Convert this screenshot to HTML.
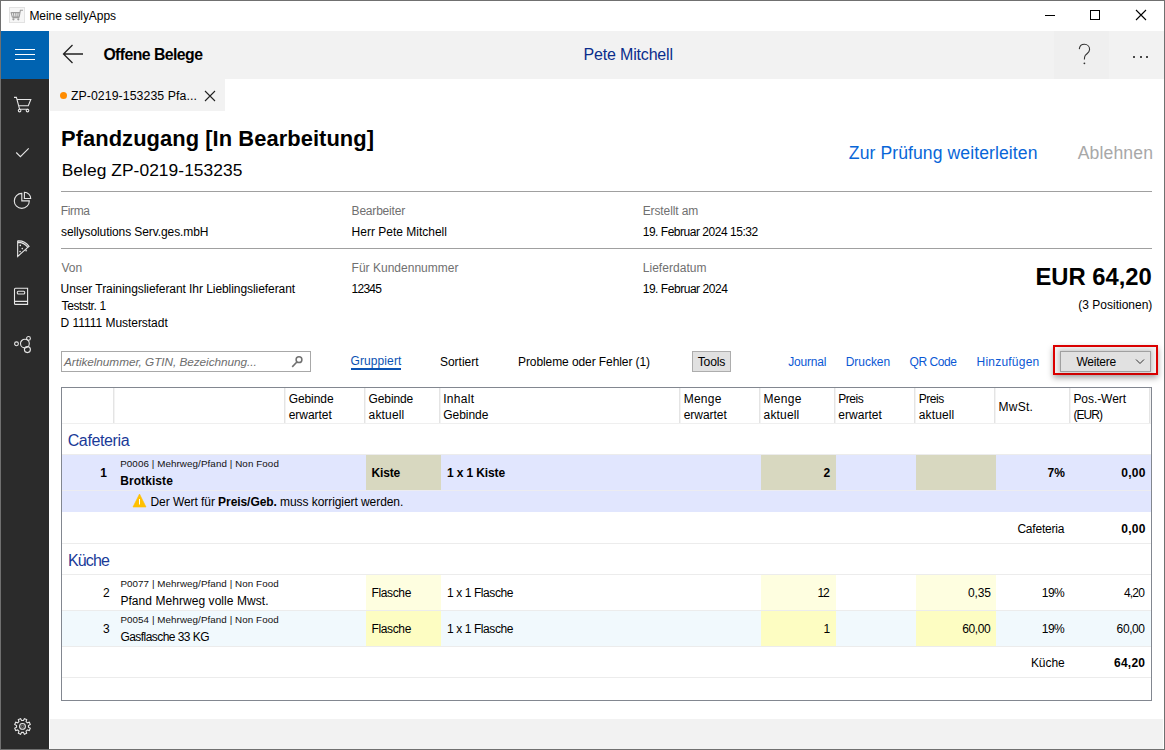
<!DOCTYPE html>
<html><head><meta charset="utf-8"><style>
html,body{margin:0;padding:0;width:1165px;height:750px;overflow:hidden;background:#fff}
body{position:relative;font-family:"Liberation Sans",sans-serif}
body>div,body>svg{position:absolute}
.t{white-space:nowrap}
</style></head><body>
<div style="left:0px;top:0px;width:1165px;height:750px;background:#fff;"></div>
<div class="t" style="top:10px;font-size:12px;line-height:12px;height:12px;font-weight:400;color:#000;font-style:normal;letter-spacing:-0.050px;left:29.40px;">Meine sellyApps</div>
<svg style="left:9px;top:7px" width="16" height="16" viewBox="0 0 16 16"><rect x="0.5" y="0.5" width="15" height="15" fill="#f6f6f6" stroke="#e2e2e2"/><path d="M14 3.2 L11.4 3.2 L10.2 10 L3.3 10 L2 5.2 M2.6 5.6 L11 5.6 M4.3 5.2 L5 10 M6.7 5.2 L7 10 M9.1 5.2 L8.8 10 M3.6 10.8 L10.2 10.8" fill="none" stroke="#9c9c9c" stroke-width="1.1"/><circle cx="4.4" cy="12.3" r="1.1" fill="#9c9c9c"/><circle cx="9.3" cy="12.3" r="1.1" fill="#9c9c9c"/></svg>
<div style="left:1045px;top:15px;width:10px;height:1px;background:#000;"></div>
<div style="left:1090px;top:10px;width:10px;height:10px;background:transparent;border:1px solid #000;box-sizing:border-box"></div>
<svg style="left:1135px;top:9px" width="12" height="12" viewBox="0 0 12 12"><path d="M1 1 L11 11 M11 1 L1 11" stroke="#000" stroke-width="1.1"/></svg>
<div style="left:49px;top:31px;width:1115px;height:48px;background:#f2f2f2;"></div>
<div style="left:1054px;top:31px;width:55px;height:48px;background:#efefef;"></div>
<div style="left:1px;top:31px;width:48px;height:48px;background:#0063b1;"></div>
<div style="left:1px;top:79px;width:48px;height:670px;background:#2b2b2b;"></div>
<div style="left:15px;top:49px;width:20px;height:1px;background:#fff;"></div>
<div style="left:15px;top:54px;width:20px;height:1px;background:#fff;"></div>
<div style="left:15px;top:59px;width:20px;height:1px;background:#fff;"></div>
<svg style="left:62px;top:44px" width="22" height="20" viewBox="0 0 22 20"><path d="M1.5 10 L21 10 M10.5 1 L1.5 10 L10.5 19" fill="none" stroke="#222" stroke-width="1.3"/></svg>
<div class="t" style="top:47px;font-size:15.8px;line-height:15.8px;height:15.8px;font-weight:700;color:#000;font-style:normal;letter-spacing:-0.558px;left:103.40px;">Offene Belege</div>
<div class="t" style="top:47px;font-size:16px;line-height:16px;height:16px;font-weight:400;color:#0a2d8c;font-style:normal;letter-spacing:-0.183px;left:583.60px;">Pete Mitchell</div>
<svg style="left:1076px;top:43px" width="16" height="22" viewBox="0 0 16 22"><path d="M3.3 6.1 C3.6 3 5.8 1.3 8.4 1.3 C11.4 1.3 13.6 3.5 13.6 6.5 C13.6 9.5 10.5 10.8 9.2 12.5 C8.5 13.4 8.4 14.5 8.4 16.6" fill="none" stroke="#333" stroke-width="1.1"/><circle cx="8.4" cy="20.3" r="0.9" fill="#333"/></svg>
<div style="left:1133px;top:55.5px;width:2px;height:2px;border-radius:1px;background:#111"></div>
<div style="left:1139.5px;top:55.5px;width:2px;height:2px;border-radius:1px;background:#111"></div>
<div style="left:1146px;top:55.5px;width:2px;height:2px;border-radius:1px;background:#111"></div>
<div style="left:50px;top:79px;width:175px;height:32px;background:#f2f2f2;"></div>
<div style="left:60px;top:92px;width:7px;height:7px;border-radius:50%;background:#ff8c00"></div>
<div class="t" style="top:90px;font-size:12.3px;line-height:12.3px;height:12.3px;font-weight:400;color:#000;font-style:normal;letter-spacing:0.075px;left:70.90px;">ZP-0219-153235 Pfa...</div>
<svg style="left:204px;top:90px" width="12" height="12" viewBox="0 0 12 12"><path d="M1 1 L11 11 M11 1 L1 11" stroke="#222" stroke-width="1.1"/></svg>
<svg style="left:13px;top:96px" width="20" height="18" viewBox="0 0 20 18"><path d="M1 1.4 L3.4 1.4 L6.6 13.3 L15.3 13.3 M3.9 3.5 L17.8 3.5 L15.3 9.8 L6 9.8" fill="none" stroke="#e6e6e6" stroke-width="1.1"/><circle cx="6.6" cy="14.6" r="1.3" fill="none" stroke="#e6e6e6" stroke-width="1.1"/><circle cx="14.5" cy="14.6" r="1.3" fill="none" stroke="#e6e6e6" stroke-width="1.1"/></svg>
<svg style="left:15px;top:146px" width="16" height="12" viewBox="0 0 16 12"><path d="M1.24 6.5 L5.4 10.65 L13.7 2.3" fill="none" stroke="#e6e6e6" stroke-width="1.1"/></svg>
<svg style="left:13px;top:190px" width="20" height="20" viewBox="0 0 20 20"><path d="M8.8 3.4 A7.5 7.5 0 1 0 16.3 10.9 L8.8 10.9 Z" fill="none" stroke="#e6e6e6" stroke-width="1.1"/><path d="M11.4 2.2 A6.3 6.3 0 0 1 17.7 8.5 L11.4 8.5 Z" fill="none" stroke="#e6e6e6" stroke-width="1.1"/></svg>
<svg style="left:15px;top:239px" width="16" height="20" viewBox="0 0 16 20"><path d="M2.4 1.9 Q9.5 1.2 14.05 7.3 L12.5 8.6 L2.66 17.4 L2.66 1.9 M3.2 3.4 Q9 3.5 12.9 8.3" fill="none" stroke="#e6e6e6" stroke-width="1.1"/><circle cx="11.1" cy="11.4" r="1" fill="#bdbdbd"/><circle cx="5.3" cy="6.4" r="0.8" fill="#e6e6e6"/><circle cx="7.3" cy="9.6" r="0.8" fill="#e6e6e6"/><circle cx="5.1" cy="12.6" r="0.8" fill="#e6e6e6"/></svg>
<svg style="left:13px;top:287px" width="16" height="19" viewBox="0 0 16 19"><path d="M2.5 1.2 L14.6 1.2 L14.6 17.4 L2.5 17.4 Q1.5 17.4 1.5 16.4 L1.5 2.2 Q1.5 1.2 2.5 1.2 M1.5 14.4 L14.6 14.4" fill="none" stroke="#e6e6e6" stroke-width="1.1"/><rect x="4.3" y="4.2" width="7.4" height="2.8" rx="1" fill="none" stroke="#e6e6e6" stroke-width="1.1"/></svg>
<svg style="left:13px;top:335px" width="20" height="20" viewBox="0 0 20 20"><circle cx="3.5" cy="8.8" r="1.9" fill="none" stroke="#e6e6e6" stroke-width="1.1"/><circle cx="11.9" cy="8.6" r="4.4" fill="none" stroke="#e6e6e6" stroke-width="1.1"/><circle cx="15.5" cy="3.4" r="1.9" fill="none" stroke="#e6e6e6" stroke-width="1.1"/><circle cx="14.4" cy="14.6" r="3" fill="none" stroke="#e6e6e6" stroke-width="1.1"/></svg>
<svg style="left:13px;top:717px" width="20" height="20" viewBox="0 0 20 20"><path d="M10.39 3.47 L11.37 1.62 L13.68 2.58 L13.07 4.58 L14.32 5.83 L16.32 5.22 L17.28 7.53 L15.43 8.51 L15.43 10.29 L17.28 11.27 L16.32 13.58 L14.32 12.97 L13.07 14.22 L13.68 16.22 L11.37 17.18 L10.39 15.33 L8.61 15.33 L7.63 17.18 L5.32 16.22 L5.93 14.22 L4.68 12.97 L2.68 13.58 L1.72 11.27 L3.57 10.29 L3.57 8.51 L1.72 7.53 L2.68 5.22 L4.68 5.83 L5.93 4.58 L5.32 2.58 L7.63 1.62 L8.61 3.47 Z" fill="none" stroke="#e6e6e6" stroke-width="1.1"/><circle cx="9.5" cy="9.4" r="2.9" fill="none" stroke="#e6e6e6" stroke-width="1.1"/><circle cx="9.5" cy="9.4" r="1.2" fill="none" stroke="#888" stroke-width="0.8"/></svg>
<div style="left:50px;top:719px;width:1113px;height:30px;background:#f2f2f2;"></div>
<div class="t" style="top:128px;font-size:21.9px;line-height:21.9px;height:21.9px;font-weight:700;color:#000;font-style:normal;letter-spacing:0.063px;left:61.00px;">Pfandzugang [In Bearbeitung]</div>
<div class="t" style="top:162px;font-size:17.4px;line-height:17.4px;height:17.4px;font-weight:400;color:#000;font-style:normal;letter-spacing:0.047px;left:61.70px;">Beleg ZP-0219-153235</div>
<div class="t" style="top:145px;font-size:17.6px;line-height:17.6px;height:17.6px;font-weight:400;color:#0866d8;font-style:normal;letter-spacing:0.083px;left:848.80px;">Zur Prüfung weiterleiten</div>
<div class="t" style="top:145px;font-size:17.6px;line-height:17.6px;height:17.6px;font-weight:400;color:#a8a8a8;font-style:normal;letter-spacing:0.129px;right:11.91px;">Ablehnen</div>
<div style="left:61px;top:191px;width:1091px;height:1px;background:#a0a0a0;"></div>
<div class="t" style="top:205px;font-size:12px;line-height:12px;height:12px;font-weight:400;color:#707070;font-style:normal;letter-spacing:-0.350px;left:60.70px;">Firma</div>
<div class="t" style="top:205px;font-size:12px;line-height:12px;height:12px;font-weight:400;color:#707070;font-style:normal;letter-spacing:-0.200px;left:351.60px;">Bearbeiter</div>
<div class="t" style="top:205px;font-size:12px;line-height:12px;height:12px;font-weight:400;color:#707070;font-style:normal;letter-spacing:-0.110px;left:642.70px;">Erstellt am</div>
<div class="t" style="top:226px;font-size:12px;line-height:12px;height:12px;font-weight:400;color:#000;font-style:normal;letter-spacing:-0.092px;left:61.00px;">sellysolutions Serv.ges.mbH</div>
<div class="t" style="top:226px;font-size:12px;line-height:12px;height:12px;font-weight:400;color:#000;font-style:normal;left:351.60px;">Herr Pete Mitchell</div>
<div class="t" style="top:226px;font-size:12px;line-height:12px;height:12px;font-weight:400;color:#000;font-style:normal;letter-spacing:-0.476px;left:642.70px;">19. Februar 2024 15:32</div>
<div style="left:61px;top:248px;width:1091px;height:1px;background:#a0a0a0;"></div>
<div class="t" style="top:262px;font-size:12px;line-height:12px;height:12px;font-weight:400;color:#707070;font-style:normal;letter-spacing:-0.100px;left:61.60px;">Von</div>
<div class="t" style="top:262px;font-size:12px;line-height:12px;height:12px;font-weight:400;color:#707070;font-style:normal;letter-spacing:0.013px;left:351.60px;">Für Kundennummer</div>
<div class="t" style="top:262px;font-size:12px;line-height:12px;height:12px;font-weight:400;color:#707070;font-style:normal;letter-spacing:0.050px;left:642.70px;">Lieferdatum</div>
<div class="t" style="top:283px;font-size:12px;line-height:12px;height:12px;font-weight:400;color:#000;font-style:normal;letter-spacing:-0.063px;left:60.60px;">Unser Trainingslieferant Ihr Lieblingslieferant</div>
<div class="t" style="top:283px;font-size:12px;line-height:12px;height:12px;font-weight:400;color:#000;font-style:normal;letter-spacing:-0.775px;left:351.60px;">12345</div>
<div class="t" style="top:283px;font-size:12px;line-height:12px;height:12px;font-weight:400;color:#000;font-style:normal;letter-spacing:-0.460px;left:642.70px;">19. Februar 2024</div>
<div class="t" style="top:300px;font-size:12px;line-height:12px;height:12px;font-weight:400;color:#000;font-style:normal;letter-spacing:-0.389px;left:61.60px;">Teststr. 1</div>
<div class="t" style="top:317px;font-size:12px;line-height:12px;height:12px;font-weight:400;color:#000;font-style:normal;letter-spacing:-0.039px;left:60.60px;">D 11111 Musterstadt</div>
<div class="t" style="top:265px;font-size:23.8px;line-height:23.8px;height:23.8px;font-weight:700;color:#000;font-style:normal;letter-spacing:-0.013px;right:13.31px;">EUR 64,20</div>
<div class="t" style="top:299px;font-size:12px;line-height:12px;height:12px;font-weight:400;color:#000;font-style:normal;right:12.65px;">(3 Positionen)</div>
<div style="left:61px;top:351px;width:250px;height:21px;background:#fff;border:1px solid #a8a8a8;box-sizing:border-box"></div>
<div class="t" style="top:357px;font-size:11.8px;line-height:11.8px;height:11.8px;font-weight:400;color:#6d6d6d;font-style:italic;letter-spacing:-0.059px;left:64.00px;">Artikelnummer, GTIN, Bezeichnung...</div>
<svg style="left:290px;top:356px" width="14" height="13" viewBox="0 0 14 13"><circle cx="9" cy="3.7" r="2.9" fill="none" stroke="#707070" stroke-width="1.5"/><path d="M6.9 6 L2.2 10.9" stroke="#707070" stroke-width="1.6"/></svg>
<div class="t" style="top:355px;font-size:12px;line-height:12px;height:12px;font-weight:400;color:#0b52b2;font-style:normal;letter-spacing:0.100px;left:350.50px;">Gruppiert</div>
<div style="left:351px;top:368px;width:50px;height:2px;background:#0b52b2;"></div>
<div class="t" style="top:356px;font-size:12px;line-height:12px;height:12px;font-weight:400;color:#000;font-style:normal;letter-spacing:-0.029px;left:440.00px;">Sortiert</div>
<div class="t" style="top:356px;font-size:12px;line-height:12px;height:12px;font-weight:400;color:#000;font-style:normal;letter-spacing:-0.087px;left:518.00px;">Probleme oder Fehler (1)</div>
<div style="left:692px;top:351px;width:39px;height:21px;background:#e1e1e1;border:1px solid #adadad;box-sizing:border-box"></div>
<div class="t" style="top:356px;font-size:12.2px;line-height:12.2px;height:12.2px;font-weight:400;color:#000;font-style:normal;letter-spacing:-0.175px;left:697.70px;">Tools</div>
<div class="t" style="top:356px;font-size:12px;line-height:12px;height:12px;font-weight:400;color:#0b58d4;font-style:normal;letter-spacing:-0.200px;left:788.20px;">Journal</div>
<div class="t" style="top:356px;font-size:12px;line-height:12px;height:12px;font-weight:400;color:#0b58d4;font-style:normal;letter-spacing:-0.033px;left:845.70px;">Drucken</div>
<div class="t" style="top:356px;font-size:12px;line-height:12px;height:12px;font-weight:400;color:#0b58d4;font-style:normal;letter-spacing:-0.417px;left:909.50px;">QR Code</div>
<div class="t" style="top:356px;font-size:12px;line-height:12px;height:12px;font-weight:400;color:#0b58d4;font-style:normal;letter-spacing:0.222px;left:976.50px;">Hinzufügen</div>
<div style="left:1053px;top:345px;width:105px;height:30px;box-sizing:border-box;border:2px solid #db0000;background:#f0f0f0;box-shadow:0 3px 6px rgba(0,0,0,0.35)"></div>
<div style="left:1060px;top:351px;width:91px;height:21px;background:#e1e1e1;border:1px solid #a0a0a0;box-sizing:border-box;box-shadow:0 0 4px 1px rgba(0,0,0,0.18)"></div>
<div class="t" style="top:356px;font-size:12px;line-height:12px;height:12px;font-weight:400;color:#000;font-style:normal;letter-spacing:-0.250px;left:1076.50px;">Weitere</div>
<svg style="left:1135px;top:358px" width="10" height="7" viewBox="0 0 10 7"><path d="M1 1.5 L5 5.5 L9 1.5" fill="none" stroke="#333" stroke-width="1"/></svg>
<div style="left:61px;top:387px;width:1091px;height:314px;background:#fff;border:1px solid #828790;box-sizing:border-box"></div>
<div style="left:113px;top:388px;width:1px;height:35px;background:#e4e4e4;"></div>
<div style="left:114px;top:388px;width:1px;height:35px;background:#f3f3f3;"></div>
<div style="left:284px;top:388px;width:1px;height:35px;background:#e4e4e4;"></div>
<div style="left:285px;top:388px;width:1px;height:35px;background:#f3f3f3;"></div>
<div style="left:364px;top:388px;width:1px;height:35px;background:#e4e4e4;"></div>
<div style="left:365px;top:388px;width:1px;height:35px;background:#f3f3f3;"></div>
<div style="left:439px;top:388px;width:1px;height:35px;background:#e4e4e4;"></div>
<div style="left:440px;top:388px;width:1px;height:35px;background:#f3f3f3;"></div>
<div style="left:679px;top:388px;width:1px;height:35px;background:#e4e4e4;"></div>
<div style="left:680px;top:388px;width:1px;height:35px;background:#f3f3f3;"></div>
<div style="left:759px;top:388px;width:1px;height:35px;background:#e4e4e4;"></div>
<div style="left:760px;top:388px;width:1px;height:35px;background:#f3f3f3;"></div>
<div style="left:834px;top:388px;width:1px;height:35px;background:#e4e4e4;"></div>
<div style="left:835px;top:388px;width:1px;height:35px;background:#f3f3f3;"></div>
<div style="left:914px;top:388px;width:1px;height:35px;background:#e4e4e4;"></div>
<div style="left:915px;top:388px;width:1px;height:35px;background:#f3f3f3;"></div>
<div style="left:994px;top:388px;width:1px;height:35px;background:#e4e4e4;"></div>
<div style="left:995px;top:388px;width:1px;height:35px;background:#f3f3f3;"></div>
<div style="left:1069px;top:388px;width:1px;height:35px;background:#e4e4e4;"></div>
<div style="left:1070px;top:388px;width:1px;height:35px;background:#f3f3f3;"></div>
<div style="left:1149px;top:388px;width:1px;height:35px;background:#e4e4e4;"></div>
<div style="left:1150px;top:388px;width:1px;height:35px;background:#f3f3f3;"></div>
<div style="left:62px;top:423px;width:1089px;height:1px;background:#efefef;"></div>
<div class="t" style="top:393px;font-size:12px;line-height:12px;height:12px;font-weight:400;color:#000;font-style:normal;letter-spacing:-0.083px;left:288.70px;">Gebinde</div>
<div class="t" style="top:409px;font-size:12px;line-height:12px;height:12px;font-weight:400;color:#000;font-style:normal;letter-spacing:-0.029px;left:288.70px;">erwartet</div>
<div class="t" style="top:393px;font-size:12px;line-height:12px;height:12px;font-weight:400;color:#000;font-style:normal;letter-spacing:-0.117px;left:368.60px;">Gebinde</div>
<div class="t" style="top:409px;font-size:12px;line-height:12px;height:12px;font-weight:400;color:#000;font-style:normal;letter-spacing:0.167px;left:368.60px;">aktuell</div>
<div class="t" style="top:393px;font-size:12px;line-height:12px;height:12px;font-weight:400;color:#000;font-style:normal;letter-spacing:0.300px;left:443.20px;">Inhalt</div>
<div class="t" style="top:409px;font-size:12px;line-height:12px;height:12px;font-weight:400;color:#000;font-style:normal;letter-spacing:-0.017px;left:443.20px;">Gebinde</div>
<div class="t" style="top:393px;font-size:12px;line-height:12px;height:12px;font-weight:400;color:#000;font-style:normal;letter-spacing:0.250px;left:683.70px;">Menge</div>
<div class="t" style="top:409px;font-size:12px;line-height:12px;height:12px;font-weight:400;color:#000;font-style:normal;letter-spacing:-0.029px;left:683.70px;">erwartet</div>
<div class="t" style="top:393px;font-size:12px;line-height:12px;height:12px;font-weight:400;color:#000;font-style:normal;letter-spacing:0.275px;left:763.60px;">Menge</div>
<div class="t" style="top:409px;font-size:12px;line-height:12px;height:12px;font-weight:400;color:#000;font-style:normal;letter-spacing:0.167px;left:763.60px;">aktuell</div>
<div class="t" style="top:393px;font-size:12px;line-height:12px;height:12px;font-weight:400;color:#000;font-style:normal;letter-spacing:-0.425px;left:838.20px;">Preis</div>
<div class="t" style="top:409px;font-size:12px;line-height:12px;height:12px;font-weight:400;color:#000;font-style:normal;letter-spacing:0.057px;left:838.20px;">erwartet</div>
<div class="t" style="top:393px;font-size:12px;line-height:12px;height:12px;font-weight:400;color:#000;font-style:normal;letter-spacing:-0.425px;left:918.70px;">Preis</div>
<div class="t" style="top:409px;font-size:12px;line-height:12px;height:12px;font-weight:400;color:#000;font-style:normal;letter-spacing:0.150px;left:918.70px;">aktuell</div>
<div class="t" style="top:401px;font-size:12px;line-height:12px;height:12px;font-weight:400;color:#000;font-style:normal;letter-spacing:0.225px;left:998.60px;">MwSt.</div>
<div class="t" style="top:393px;font-size:12px;line-height:12px;height:12px;font-weight:400;color:#000;font-style:normal;letter-spacing:-0.062px;left:1073.40px;">Pos.-Wert</div>
<div class="t" style="top:409px;font-size:12px;line-height:12px;height:12px;font-weight:400;color:#000;font-style:normal;letter-spacing:-0.950px;left:1073.40px;">(EUR)</div>
<div class="t" style="top:433px;font-size:16px;line-height:16px;height:16px;font-weight:400;color:#1a3a98;font-style:normal;letter-spacing:-0.375px;left:67.70px;">Cafeteria</div>
<div style="left:62px;top:455px;width:1089px;height:57px;background:#e1e6fe;"></div>
<div style="left:62px;top:490px;width:1089px;height:1px;background:#ececf0;"></div>
<div style="left:62px;top:454px;width:1089px;height:1px;background:#ececec;"></div>
<div style="left:366px;top:455px;width:75px;height:35px;background:#d8d8c0;"></div>
<div style="left:761px;top:455px;width:75px;height:35px;background:#d8d8c0;"></div>
<div style="left:916px;top:455px;width:80px;height:35px;background:#d8d8c0;"></div>
<div class="t" style="top:467px;font-size:12px;line-height:12px;height:12px;font-weight:700;color:#000;font-style:normal;right:1058.01px;">1</div>
<div class="t" style="top:459px;font-size:9.8px;line-height:9.8px;height:9.8px;font-weight:400;color:#111;font-style:normal;letter-spacing:0.087px;left:120.20px;">P0006 | Mehrweg/Pfand | Non Food</div>
<div class="t" style="top:475px;font-size:12px;line-height:12px;height:12px;font-weight:700;color:#000;font-style:normal;letter-spacing:0.075px;left:120.20px;">Brotkiste</div>
<div class="t" style="top:467px;font-size:12px;line-height:12px;height:12px;font-weight:700;color:#000;font-style:normal;letter-spacing:-0.175px;left:371.50px;">Kiste</div>
<div class="t" style="top:467px;font-size:12px;line-height:12px;height:12px;font-weight:700;color:#000;font-style:normal;letter-spacing:-0.130px;left:447.00px;">1 x 1 Kiste</div>
<div class="t" style="top:467px;font-size:12px;line-height:12px;height:12px;font-weight:700;color:#000;font-style:normal;right:334.71px;">2</div>
<div class="t" style="top:467px;font-size:12px;line-height:12px;height:12px;font-weight:700;color:#000;font-style:normal;letter-spacing:0.100px;right:99.86px;">7%</div>
<div class="t" style="top:467px;font-size:12px;line-height:12px;height:12px;font-weight:700;color:#000;font-style:normal;letter-spacing:0.267px;right:19.37px;">0,00</div>
<svg style="left:132px;top:493px" width="15" height="15" viewBox="0 0 15 15"><path d="M7.5 1 L14 14 L1 14 Z" fill="#ffc000" stroke="#ffc000" stroke-width="0.6" stroke-linejoin="round"/><path d="M7.5 6 L7.5 11.5" stroke="#fff" stroke-width="1"/></svg>
<div class="t" style="top:496px;font-size:12px;line-height:12px;height:12px;font-weight:400;color:#000;font-style:normal;letter-spacing:-0.067px;left:150.50px;">Der Wert für <b>Preis/Geb.</b> muss korrigiert werden.</div>
<div class="t" style="top:523px;font-size:12px;line-height:12px;height:12px;font-weight:400;color:#000;font-style:normal;letter-spacing:-0.212px;right:100.81px;">Cafeteria</div>
<div class="t" style="top:523px;font-size:12px;line-height:12px;height:12px;font-weight:700;color:#000;font-style:normal;letter-spacing:0.267px;right:19.37px;">0,00</div>
<div style="left:62px;top:543px;width:1089px;height:1px;background:#ececec;"></div>
<div class="t" style="top:553px;font-size:16px;line-height:16px;height:16px;font-weight:400;color:#1a3a98;font-style:normal;letter-spacing:-0.850px;left:68.00px;">Küche</div>
<div style="left:62px;top:574px;width:1089px;height:1px;background:#ececec;"></div>
<div style="left:366px;top:575px;width:75px;height:35px;background:#fefee0;"></div>
<div style="left:761px;top:575px;width:75px;height:35px;background:#fefee0;"></div>
<div style="left:916px;top:575px;width:80px;height:35px;background:#fefee0;"></div>
<div style="left:62px;top:610px;width:1089px;height:1px;background:#ececec;"></div>
<div class="t" style="top:587px;font-size:12px;line-height:12px;height:12px;font-weight:400;color:#000;font-style:normal;right:1055.31px;">2</div>
<div class="t" style="top:579px;font-size:9.8px;line-height:9.8px;height:9.8px;font-weight:400;color:#111;font-style:normal;letter-spacing:0.074px;left:120.40px;">P0077 | Mehrweg/Pfand | Non Food</div>
<div class="t" style="top:595px;font-size:12px;line-height:12px;height:12px;font-weight:400;color:#000;font-style:normal;letter-spacing:0.058px;left:120.40px;">Pfand Mehrweg volle Mwst.</div>
<div class="t" style="top:587px;font-size:12px;line-height:12px;height:12px;font-weight:400;color:#000;font-style:normal;letter-spacing:-0.383px;left:371.60px;">Flasche</div>
<div class="t" style="top:587px;font-size:12px;line-height:12px;height:12px;font-weight:400;color:#000;font-style:normal;letter-spacing:-0.408px;left:447.00px;">1 x 1 Flasche</div>
<div class="t" style="top:587px;font-size:12px;line-height:12px;height:12px;font-weight:400;color:#000;font-style:normal;letter-spacing:-1.000px;right:336.24px;">12</div>
<div class="t" style="top:587px;font-size:12px;line-height:12px;height:12px;font-weight:400;color:#000;font-style:normal;letter-spacing:-0.133px;right:174.17px;">0,35</div>
<div class="t" style="top:587px;font-size:12px;line-height:12px;height:12px;font-weight:400;color:#000;font-style:normal;letter-spacing:-0.550px;right:100.82px;">19%</div>
<div class="t" style="top:587px;font-size:12px;line-height:12px;height:12px;font-weight:400;color:#000;font-style:normal;letter-spacing:-0.833px;right:20.97px;">4,20</div>
<div style="left:62px;top:611px;width:1089px;height:35px;background:#f1f9fd;"></div>
<div style="left:366px;top:611px;width:75px;height:35px;background:#fdfdc2;"></div>
<div style="left:761px;top:611px;width:75px;height:35px;background:#fdfdc2;"></div>
<div style="left:916px;top:611px;width:80px;height:35px;background:#fdfdc2;"></div>
<div style="left:62px;top:646px;width:1089px;height:1px;background:#ececec;"></div>
<div class="t" style="top:623px;font-size:12px;line-height:12px;height:12px;font-weight:400;color:#000;font-style:normal;right:1055.31px;">3</div>
<div class="t" style="top:615px;font-size:9.8px;line-height:9.8px;height:9.8px;font-weight:400;color:#111;font-style:normal;letter-spacing:0.074px;left:120.40px;">P0054 | Mehrweg/Pfand | Non Food</div>
<div class="t" style="top:631px;font-size:12px;line-height:12px;height:12px;font-weight:400;color:#000;font-style:normal;letter-spacing:-0.547px;left:120.40px;">Gasflasche 33 KG</div>
<div class="t" style="top:623px;font-size:12px;line-height:12px;height:12px;font-weight:400;color:#000;font-style:normal;letter-spacing:-0.383px;left:371.60px;">Flasche</div>
<div class="t" style="top:623px;font-size:12px;line-height:12px;height:12px;font-weight:400;color:#000;font-style:normal;letter-spacing:-0.408px;left:447.00px;">1 x 1 Flasche</div>
<div class="t" style="top:623px;font-size:12px;line-height:12px;height:12px;font-weight:400;color:#000;font-style:normal;right:334.91px;">1</div>
<div class="t" style="top:623px;font-size:12px;line-height:12px;height:12px;font-weight:400;color:#000;font-style:normal;letter-spacing:-0.425px;right:174.79px;">60,00</div>
<div class="t" style="top:623px;font-size:12px;line-height:12px;height:12px;font-weight:400;color:#000;font-style:normal;letter-spacing:-0.550px;right:100.82px;">19%</div>
<div class="t" style="top:623px;font-size:12px;line-height:12px;height:12px;font-weight:400;color:#000;font-style:normal;letter-spacing:-0.400px;right:20.37px;">60,00</div>
<div class="t" style="top:657px;font-size:12px;line-height:12px;height:12px;font-weight:400;color:#000;font-style:normal;letter-spacing:-0.050px;right:100.32px;">Küche</div>
<div class="t" style="top:657px;font-size:12px;line-height:12px;height:12px;font-weight:700;color:#000;font-style:normal;letter-spacing:0.250px;right:19.72px;">64,20</div>
<div style="left:62px;top:677px;width:1089px;height:1px;background:#ececec;"></div>
<div style="left:0;top:0;width:1165px;height:750px;box-sizing:border-box;border:1px solid #707070;background:transparent"></div>
</body></html>
